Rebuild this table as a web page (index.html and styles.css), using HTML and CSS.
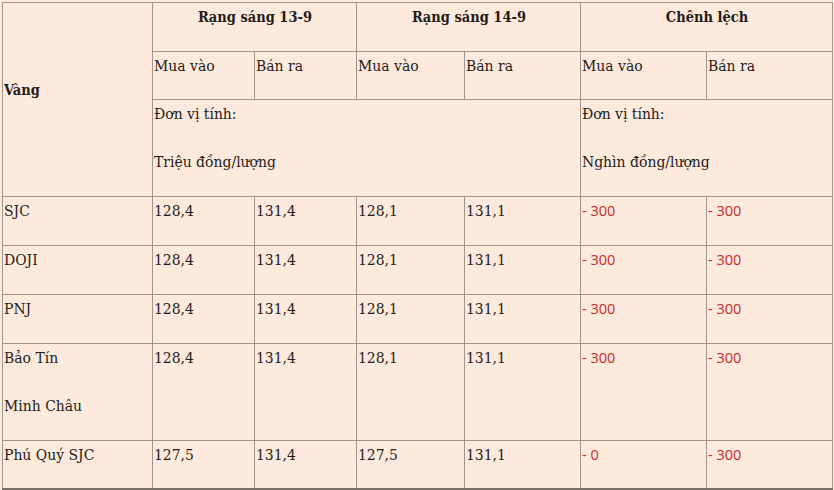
FILE: index.html
```html
<!DOCTYPE html>
<html lang="vi">
<head>
<meta charset="utf-8">
<title>Giá vàng</title>
<link rel="stylesheet" href="styles.css">
</head>
<body>
<table class="gold">
  <colgroup>
    <col class="c1"><col class="c2"><col class="c3"><col class="c4"><col class="c5"><col class="c6"><col class="c7">
  </colgroup>
  <tbody>
    <tr>
      <td rowspan="3" class="mid"><p><b>Vàng</b></p></td>
      <td colspan="2" class="center"><p><b>Rạng sáng 13-9</b></p></td>
      <td colspan="2" class="center"><p><b>Rạng sáng 14-9</b></p></td>
      <td colspan="2" class="center"><p><b>Chênh lệch</b></p></td>
    </tr>
    <tr class="short">
      <td><p>Mua vào</p></td>
      <td><p>Bán ra</p></td>
      <td><p>Mua vào</p></td>
      <td><p>Bán ra</p></td>
      <td><p>Mua vào</p></td>
      <td><p>Bán ra</p></td>
    </tr>
    <tr>
      <td colspan="4"><p>Đơn vị tính:</p><p>Triệu đồng/lượng</p></td>
      <td colspan="2"><p>Đơn vị tính:</p><p>Nghìn đồng/lượng</p></td>
    </tr>
    <tr>
      <td><p>SJC</p></td>
      <td><p>128,4</p></td>
      <td><p>131,4</p></td>
      <td><p>128,1</p></td>
      <td><p>131,1</p></td>
      <td><p class="red">- 300</p></td>
      <td><p class="red">- 300</p></td>
    </tr>
    <tr>
      <td><p>DOJI</p></td>
      <td><p>128,4</p></td>
      <td><p>131,4</p></td>
      <td><p>128,1</p></td>
      <td><p>131,1</p></td>
      <td><p class="red">- 300</p></td>
      <td><p class="red">- 300</p></td>
    </tr>
    <tr>
      <td><p>PNJ</p></td>
      <td><p>128,4</p></td>
      <td><p>131,4</p></td>
      <td><p>128,1</p></td>
      <td><p>131,1</p></td>
      <td><p class="red">- 300</p></td>
      <td><p class="red">- 300</p></td>
    </tr>
    <tr>
      <td><p>Bảo Tín</p><p>Minh Châu</p></td>
      <td><p>128,4</p></td>
      <td><p>131,4</p></td>
      <td><p>128,1</p></td>
      <td><p>131,1</p></td>
      <td><p class="red">- 300</p></td>
      <td><p class="red">- 300</p></td>
    </tr>
    <tr class="short last">
      <td><p>Phú Quý SJC</p></td>
      <td><p>127,5</p></td>
      <td><p>131,4</p></td>
      <td><p>127,5</p></td>
      <td><p>131,1</p></td>
      <td><p class="red">- 0</p></td>
      <td><p class="red">- 300</p></td>
    </tr>
  </tbody>
</table>
</body>
</html>
```
FILE: styles.css
```css
html, body {
  margin: 0;
  padding: 0;
  background: #fdeadc;
}
body {
  padding: 2px 0 0 2px;
  font-family: "DejaVu Serif Condensed", "DejaVu Serif", serif;
  font-size: 15.5px;
  color: #1f1c1a;
}
.gold {
  border-collapse: collapse;
  table-layout: fixed;
  width: 830px;
  background: #fdeadc;
}
.c1 { width: 150px; }
.c2 { width: 102px; }
.c3 { width: 102px; }
.c4 { width: 108px; }
.c5 { width: 116px; }
.c6 { width: 126px; }
.c7 { width: 126px; }
.gold td {
  border: 1px solid #9d958e;
  padding: 0 0 0 1px;
  vertical-align: top;
  text-align: left;
}
.gold td.mid { vertical-align: middle; }
.gold td.center { text-align: center; }
.gold p {
  margin: 0 0 20px;
  line-height: 28px;
}
.gold tr.short p { margin-bottom: 19px; }
.gold b {
  font-weight: bold;
  font-size: 14.5px;
}
.gold tr.last td { border-bottom: 2px solid #77706a; }
.red {
  color: #c9282a;
  font-family: "Open Sans", "DejaVu Sans", sans-serif;
  font-size: 14.5px;
}
```
